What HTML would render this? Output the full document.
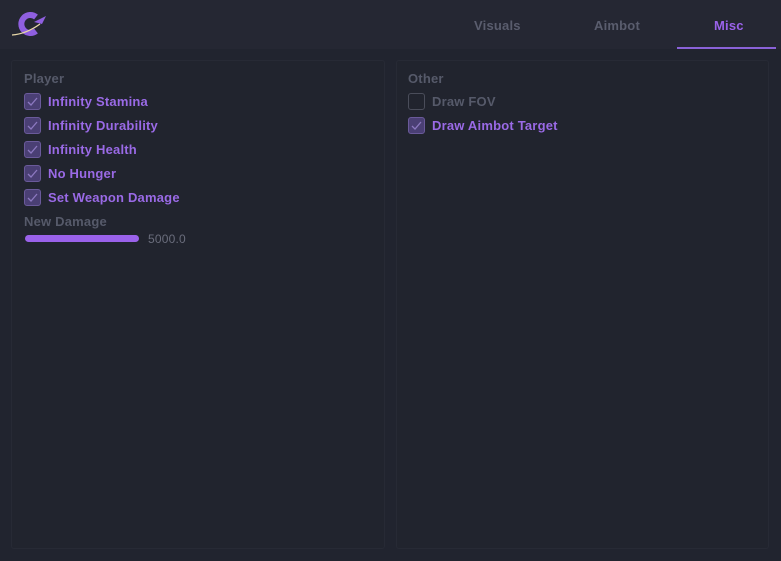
<!DOCTYPE html>
<html><head><meta charset="utf-8"><style>
*{margin:0;padding:0;box-sizing:border-box}
body{width:781px;height:561px;background:#21242f;font-family:"Liberation Sans",sans-serif;font-weight:bold;font-size:13px;position:relative;overflow:hidden;letter-spacing:0.2px}
.hdr{position:absolute;left:0;top:0;width:781px;height:49px;background:#252733}
.tab{position:absolute;top:18px;font-size:13px;color:#5a5d6e}
.ul{position:absolute;left:677px;top:47px;width:99px;height:2px;background:#8a62d8}
.panel{position:absolute;top:60px;height:489px;border:1px solid #272a35;border-radius:3px;background:#21242e}
.t{position:absolute;font-size:13px;color:#565a6a}
.cb{position:absolute;width:17px;height:17px;border:1px solid #6a5a9a;border-radius:3px;background:#4a3f74}
.cb svg{position:absolute;left:2px;top:2px}
.cb.off{background:transparent;border-color:#4a4d5a}
.lbl{position:absolute;color:#9a6ae6;font-size:13px}
</style></head><body>
<div class="hdr">
<svg style="position:absolute;left:10px;top:10px" width="40" height="28" viewBox="0 0 40 28">
<path d="M26 7 A9 9 0 1 0 26 21" stroke="#8f5fe0" stroke-width="6" fill="none"/>
<path d="M24 12 L36 6 L32 14 Z" fill="#8f5fe0"/>
<path d="M2 25 Q16 24 30 14" stroke="#e8d8a8" stroke-width="1.3" fill="none"/>
</svg>
<div class="tab" style="left:474px">Visuals</div>
<div class="tab" style="left:594px">Aimbot</div>
<div class="tab" style="left:714px;color:#9a62ea">Misc</div>
<div class="ul"></div>
</div>
<div class="panel" style="left:11px;width:374px"></div>
<div class="panel" style="left:396px;width:373px"></div>

<div class="t" style="left:24px;top:71px">Player</div>
<div class="cb" style="left:24px;top:93px"><svg width="11" height="11"><path d="M1 6 L4 9 L10 2" stroke="#8c78c0" stroke-width="1.3" fill="none"/></svg></div><div class="lbl" style="left:48px;top:94px">Infinity Stamina</div>
<div class="cb" style="left:24px;top:117px"><svg width="11" height="11"><path d="M1 6 L4 9 L10 2" stroke="#8c78c0" stroke-width="1.3" fill="none"/></svg></div><div class="lbl" style="left:48px;top:118px">Infinity Durability</div>
<div class="cb" style="left:24px;top:141px"><svg width="11" height="11"><path d="M1 6 L4 9 L10 2" stroke="#8c78c0" stroke-width="1.3" fill="none"/></svg></div><div class="lbl" style="left:48px;top:142px">Infinity Health</div>
<div class="cb" style="left:24px;top:165px"><svg width="11" height="11"><path d="M1 6 L4 9 L10 2" stroke="#8c78c0" stroke-width="1.3" fill="none"/></svg></div><div class="lbl" style="left:48px;top:166px">No Hunger</div>
<div class="cb" style="left:24px;top:189px"><svg width="11" height="11"><path d="M1 6 L4 9 L10 2" stroke="#8c78c0" stroke-width="1.3" fill="none"/></svg></div><div class="lbl" style="left:48px;top:190px">Set Weapon Damage</div>
<div class="t" style="left:24px;top:214px">New Damage</div>
<div style="position:absolute;left:25px;top:235px;width:114px;height:7px;border-radius:4px;background:#9a62ea"></div>
<div class="t" style="left:148px;top:232px;font-size:12px;font-weight:normal;color:#6a6d7c">5000.0</div>

<div class="t" style="left:408px;top:71px">Other</div>
<div class="cb off" style="left:408px;top:93px"></div><div class="lbl" style="left:432px;top:94px;color:#565a6a">Draw FOV</div>
<div class="cb" style="left:408px;top:117px"><svg width="11" height="11"><path d="M1 6 L4 9 L10 2" stroke="#8c78c0" stroke-width="1.3" fill="none"/></svg></div><div class="lbl" style="left:432px;top:118px">Draw Aimbot Target</div>
</body></html>
